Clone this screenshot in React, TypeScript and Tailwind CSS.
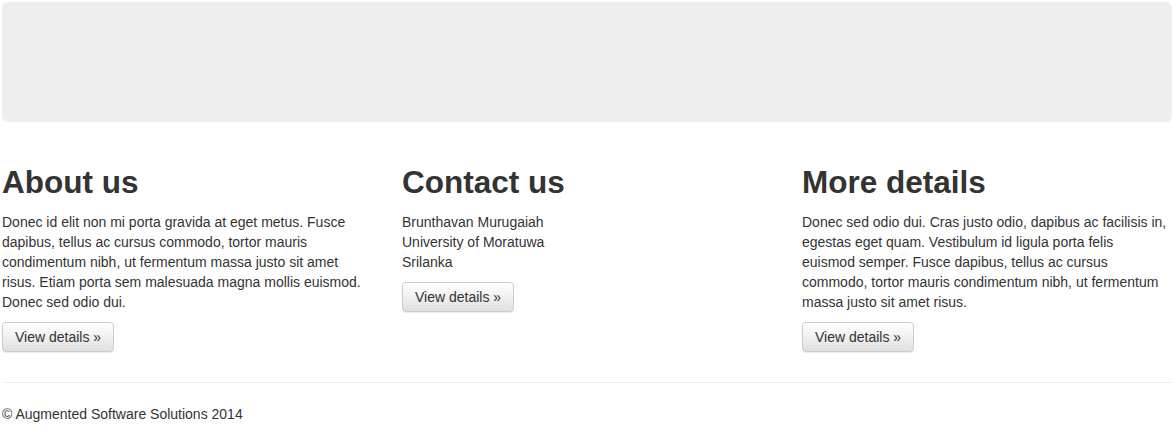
const columns = [
  {
    title: "About us",
    lines: [
      "Donec id elit non mi porta gravida at eget metus. Fusce dapibus, tellus ac cursus commodo, tortor mauris condimentum nibh, ut fermentum massa justo sit amet risus. Etiam porta sem malesuada magna mollis euismod. Donec sed odio dui.",
    ],
  },
  {
    title: "Contact us",
    lines: ["Brunthavan Murugaiah", "University of Moratuwa", "Srilanka"],
  },
  {
    title: "More details",
    lines: [
      "Donec sed odio dui. Cras justo odio, dapibus ac facilisis in, egestas eget quam. Vestibulum id ligula porta felis euismod semper. Fusce dapibus, tellus ac cursus commodo, tortor mauris condimentum nibh, ut fermentum massa justo sit amet risus.",
    ],
  },
];

function App() {
  return (
    <div
      className="min-h-screen bg-white text-[#333] text-sm leading-5"
      style={{ fontFamily: '"Liberation Sans", Arial, sans-serif' }}
    >
      <div className="w-[1170px] ml-[2px] pt-[2px]">
        {/* jumbotron */}
        <div className="h-[120px] rounded-md bg-[#eeeeee]" />

        {/* columns */}
        <div className="grid grid-cols-3 gap-[30px]">
          {columns.map((col) => (
            <div key={col.title}>
              <h2 className="mt-[44px] mb-[13px] text-[31.5px] leading-[33px] font-bold">
                {col.title}
              </h2>
              <p className="mb-[10px] max-w-[367px]">
                {col.lines.map((line, i) => (
                  <span key={i}>
                    {line}
                    {i < col.lines.length - 1 && <br />}
                  </span>
                ))}
              </p>
              <button className="h-[30px] px-3 rounded border border-[#ccc] bg-gradient-to-b from-white to-[#e0e0e0] text-[#333] shadow-[inset_0_1px_0_rgba(255,255,255,0.15),0_1px_1px_rgba(0,0,0,0.075)]">
                View details &raquo;
              </button>
            </div>
          ))}
        </div>

        <hr className="mt-[30px] border-t border-[#eee]" />

        <footer className="pt-[21px]">
          <p>&copy; Augmented Software Solutions 2014</p>
        </footer>
      </div>
    </div>
  );
}

export default App;
